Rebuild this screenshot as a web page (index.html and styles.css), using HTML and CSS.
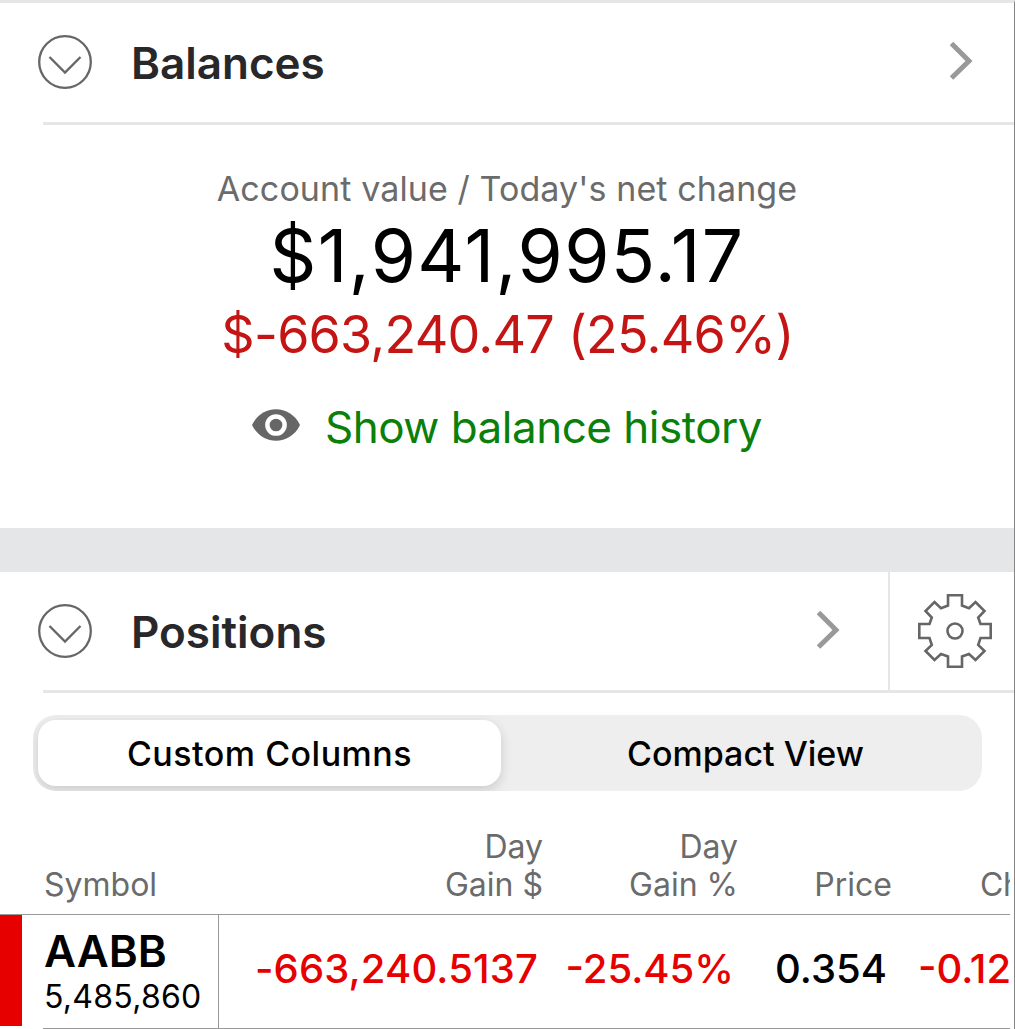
FILE: index.html
```html
<!DOCTYPE html>
<html lang="en">
<head>
    <meta charset="UTF-8">
    <meta name="viewport" content="width=device-width, initial-scale=1.0">
    <title>Portfolio</title>
    <link rel="stylesheet" href="styles.css">
</head>
<body>
    <div class="page">
        <section class="balances">
            <div class="section-header">
                <svg class="toggle" viewBox="0 0 54 54">
                    <circle cx="27" cy="27" r="25.8"/>
                    <path d="M11.5 22 L27 37.5 L42.5 22"/>
                </svg>
                <h2>Balances</h2>
                <svg class="arrow" viewBox="0 0 24 40"><path d="M2.5 2.5 L20 20 L2.5 37"/></svg>
            </div>
            <div class="summary">
                <div class="label">Account value / Today's net change</div>
                <div class="amount">$1,941,995.17</div>
                <div class="change">$-663,240.47 (25.46%)</div>
                <a class="history">
                    <svg class="eye" viewBox="0 0 48 32">
                        <path d="M0 16 C10 -5 38 -5 48 16 C38 37 10 37 0 16 Z"/>
                        <circle class="eye-ring" cx="24" cy="16" r="8.6"/>
                    </svg>
                    <span>Show balance history</span>
                </a>
            </div>
        </section>

        <section class="positions">
            <div class="section-header">
                <svg class="toggle" viewBox="0 0 54 54">
                    <circle cx="27" cy="27" r="25.8"/>
                    <path d="M11.5 22 L27 37.5 L42.5 22"/>
                </svg>
                <h2>Positions</h2>
                <svg class="arrow" viewBox="0 0 24 40"><path d="M2.5 2.5 L20 20 L2.5 37"/></svg>
                <div class="settings">
                    <svg class="gear" viewBox="0 0 74 74">
                        <path d="M30 1.3 H44 V11.5 L51 14.2 L57.5 8 L66.5 17 L60.2 23.5 L62.5 30 H72.7 V44 H62.5 L60.2 51 L66.5 57 L57.5 66 L51 60 L44 62.5 V72.7 H30 V62.5 L23 60 L16.5 66 L7.5 57 L13.8 51 L11.5 44 H1.3 V30 H11.5 L13.8 23.5 L7.5 17 L16.5 8 L23 14.2 L30 11.5 Z"/>
                        <circle cx="37" cy="37" r="7.5"/>
                    </svg>
                </div>
            </div>

            <div class="segmented">
                <button class="segment active">Custom Columns</button>
                <button class="segment">Compact View</button>
            </div>

            <div class="table">
                <div class="row head">
                    <div class="symbol">Symbol</div>
                    <div class="num">Day<br>Gain $</div>
                    <div class="num">Day<br>Gain %</div>
                    <div class="num">Price</div>
                    <div class="cut">Change</div>
                </div>
                <div class="row position">
                    <div class="symbol">
                        <div class="ticker">AABB</div>
                        <div class="quantity">5,485,860</div>
                    </div>
                    <div class="num gain loss">-663,240.5137</div>
                    <div class="num pct loss">-25.45%</div>
                    <div class="num">0.354</div>
                    <div class="cut loss">-0.12</div>
                </div>
            </div>
        </section>
    </div>
</body>
</html>
```

FILE: styles.css
```css
:root {
    --line: #e5e6e8;
    --icon: #666666;
    --muted: #6b6b6b;
    --loss: #e60000;
}

* {
    box-sizing: border-box;
}

body {
    margin: 0;
    background: #ffffff;
    color: #000000;
    font-family: Inter, 'Liberation Sans', sans-serif;
}

.page {
    height: 1029px;
    overflow: hidden;
    border-top: 3px solid var(--line);
    border-right: 1px solid #858585;
    white-space: nowrap;
}

svg {
    display: block;
    flex: none;
    fill: none;
}

.section-header {
    display: flex;
    align-items: center;
    height: 122px;
    padding: 0 0 4px 38px;
    background: linear-gradient(var(--line), var(--line)) 43px 100% / 100% 3px no-repeat;
}

.toggle {
    width: 54px;
    height: 54px;
    stroke: var(--icon);
    stroke-width: 2.3;
}

.section-header h2 {
    flex: 1;
    margin: 2px 0 0 39px;
    font-size: 44px;
    font-weight: 600;
    line-height: 54px;
    color: #28282a;
}

.arrow {
    width: 24px;
    height: 40px;
    margin: 0 41px 2px 0;
    stroke: #999999;
    stroke-width: 5;
}

.summary {
    display: flex;
    flex-direction: column;
    align-items: center;
    height: 403px;
    padding-top: 42px;
}

.label {
    font-size: 34px;
    line-height: 44px;
    color: var(--muted);
    letter-spacing: 0.1px;
}

.amount {
    font-size: 73px;
    line-height: 90px;
    letter-spacing: 1.4px;
}

.change {
    margin-top: 1px;
    padding-left: 1px;
    font-size: 52px;
    line-height: 66px;
    color: #c41414;
    letter-spacing: -0.75px;
}

.history {
    display: flex;
    align-items: center;
    gap: 25px;
    margin-top: 32px;
    font-size: 44px;
    line-height: 54px;
    color: #0a800a;
    letter-spacing: -0.5px;
}

.eye {
    width: 48px;
    height: 32px;
    margin-bottom: 4px;
    fill: var(--icon);
}

.eye-ring {
    stroke: #ffffff;
    stroke-width: 4.5;
}

.positions {
    border-top: 44px solid var(--line);
}

.positions .section-header {
    height: 121px;
    padding-bottom: 3px;
}

.positions .arrow {
    margin-right: 48px;
}

.settings {
    display: flex;
    align-items: center;
    align-self: stretch;
    width: 126px;
    padding-left: 28px;
    border-left: 2px solid var(--line);
}

.gear {
    width: 74px;
    height: 74px;
    stroke: var(--icon);
    stroke-width: 2.6;
}

.segmented {
    display: flex;
    width: 949px;
    height: 76px;
    margin: 22px 0 0 33px;
    padding: 5px;
    border-radius: 23px;
    background: #eeeeee;
    overflow: hidden;
}

.segment {
    flex: 1;
    padding: 0 0 0 13px;
    border: 0;
    border-radius: 18px;
    background: none;
    color: #000000;
    font-family: inherit;
    font-size: 34px;
    font-weight: 500;
}

.segment.active {
    flex: none;
    width: 463px;
    padding: 0;
    background: #ffffff;
    box-shadow: 0 4px 12px rgba(0, 0, 20, 0.15);
    letter-spacing: 0.5px;
}

.table {
    width: 1010px;
    overflow: hidden;
}

.row {
    display: grid;
    grid-template-columns: 219px 324px 195px 154px 200px;
}

.num {
    text-align: right;
}

.head {
    align-items: end;
    height: 124px;
    padding-bottom: 10px;
    border-bottom: 1px solid #999999;
    font-size: 32px;
    line-height: 38px;
    color: var(--muted);
}

.head .symbol {
    padding-left: 44px;
}

.head .cut {
    padding-left: 88px;
    letter-spacing: -0.5px;
}

.position {
    height: 114px;
    align-items: center;
    padding-bottom: 7px;
    background: linear-gradient(#999999, #999999) 43px 100% / 100% 1px no-repeat;
    font-size: 40px;
    font-weight: 500;
}

.position .symbol {
    align-self: start;
    height: 113px;
    margin-bottom: -6px;
    padding: 9px 0 0 44px;
    border-right: 1px solid #999999;
    background: linear-gradient(var(--loss), var(--loss)) 0 0 / 22px 111px no-repeat;
}

.ticker {
    font-size: 44px;
    font-weight: 600;
    line-height: 54px;
}

.quantity {
    font-size: 32px;
    font-weight: 400;
    line-height: 38px;
    letter-spacing: 0.25px;
}

.loss {
    color: var(--loss);
}

.position .num {
    padding-right: 5px;
}

.position .gain {
    letter-spacing: 0.15px;
}

.position .pct {
    padding-right: 4px;
}

.position .cut {
    padding-left: 26px;
}
```
